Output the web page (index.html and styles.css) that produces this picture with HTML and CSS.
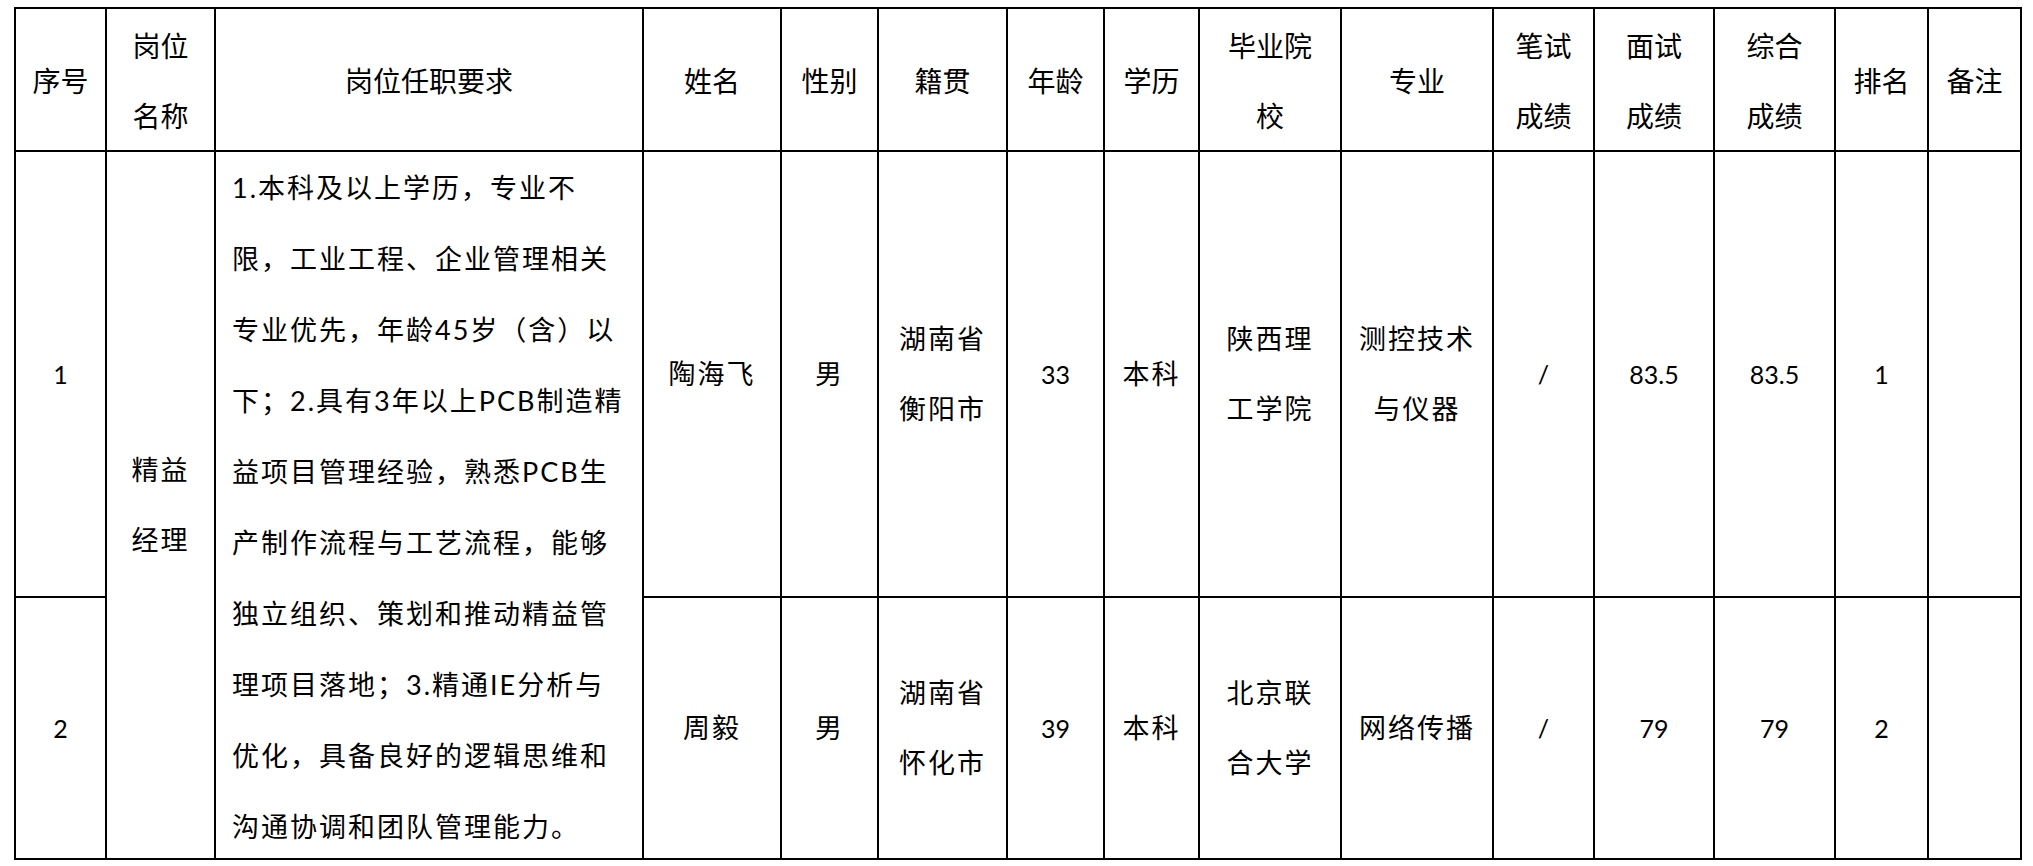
FILE: index.html
```html
<!DOCTYPE html>
<html lang="zh-CN">
<head>
<meta charset="utf-8">
<title>岗位面试成绩</title>
<link rel="stylesheet" href="styles.css">
</head>
<body>
<div class="page">
  <div class="sheet">
    <div class="cell head">序号</div>
    <div class="cell head">岗位<br>名称</div>
    <div class="cell head">岗位任职要求</div>
    <div class="cell head">姓名</div>
    <div class="cell head">性别</div>
    <div class="cell head">籍贯</div>
    <div class="cell head">年龄</div>
    <div class="cell head">学历</div>
    <div class="cell head">毕业院<br>校</div>
    <div class="cell head">专业</div>
    <div class="cell head">笔试<br>成绩</div>
    <div class="cell head">面试<br>成绩</div>
    <div class="cell head">综合<br>成绩</div>
    <div class="cell head">排名</div>
    <div class="cell head">备注</div>

    <div class="cell num">1</div>
    <div class="cell body tall">精益<br>经理</div>
    <div class="cell req tall">
      <span class="ln">1.本科及以上学历，专业不</span>
      <span class="ln">限，工业工程、企业管理相关</span>
      <span class="ln">专业优先，年龄45岁（含）以</span>
      <span class="ln">下；2.具有3年以上PCB制造精</span>
      <span class="ln">益项目管理经验，熟悉PCB生</span>
      <span class="ln">产制作流程与工艺流程，能够</span>
      <span class="ln">独立组织、策划和推动精益管</span>
      <span class="ln">理项目落地；3.精通IE分析与</span>
      <span class="ln">优化，具备良好的逻辑思维和</span>
      <span class="ln">沟通协调和团队管理能力。</span>
    </div>
    <div class="cell body">陶海飞</div>
    <div class="cell body">男</div>
    <div class="cell body">湖南省<br>衡阳市</div>
    <div class="cell num">33</div>
    <div class="cell body">本科</div>
    <div class="cell body">陕西理<br>工学院</div>
    <div class="cell body">测控技术<br>与仪器</div>
    <div class="cell num">/</div>
    <div class="cell num">83.5</div>
    <div class="cell num">83.5</div>
    <div class="cell num">1</div>
    <div class="cell"></div>

    <div class="cell num">2</div>
    <div class="cell body">周毅</div>
    <div class="cell body">男</div>
    <div class="cell body">湖南省<br>怀化市</div>
    <div class="cell num">39</div>
    <div class="cell body">本科</div>
    <div class="cell body">北京联<br>合大学</div>
    <div class="cell body">网络传播</div>
    <div class="cell num">/</div>
    <div class="cell num">79</div>
    <div class="cell num">79</div>
    <div class="cell num">2</div>
    <div class="cell"></div>
  </div>
</div>
</body>
</html>
```

FILE: styles.css
```css
html, body {
  margin: 0;
  padding: 0;
  background: #ffffff;
}

.page {
  padding: 7px 0 0 14px;
}

.sheet {
  display: grid;
  grid-template-columns: 89px 107px 426px 136px 95px 127px 95px 93px 140px 150px 99px 118px 119px 91px 91px;
  grid-template-rows: 141px 444px 260px;
  gap: 2px;
  padding: 2px;
  background: #000000;
  width: max-content;
  color: #000000;
}

.cell {
  background: #ffffff;
  display: flex;
  align-items: center;
  justify-content: center;
  text-align: center;
  overflow: visible;
}

.head {
  font-family: "Noto Sans CJK SC", sans-serif;
  font-size: 28px;
  line-height: 70px;
  font-weight: 400;
}

.body {
  font-family: "Lato", "Noto Sans CJK SC", sans-serif;
  font-size: 27px;
  line-height: 70px;
  letter-spacing: 2px;
  font-weight: 400;
}

.num {
  font-family: "Lato", "Noto Sans CJK SC", sans-serif;
  font-size: 25px;
  line-height: 30px;
}

.tall {
  grid-row: span 2;
}

.req {
  flex-direction: column;
  align-items: flex-start;
  justify-content: flex-start;
  text-align: left;
  padding-left: 16px;
  font-family: "Lato", "Noto Sans CJK SC", sans-serif;
  font-size: 27px;
  line-height: 71px;
  letter-spacing: 2px;
}

.ln {
  display: block;
  white-space: nowrap;
}
```
